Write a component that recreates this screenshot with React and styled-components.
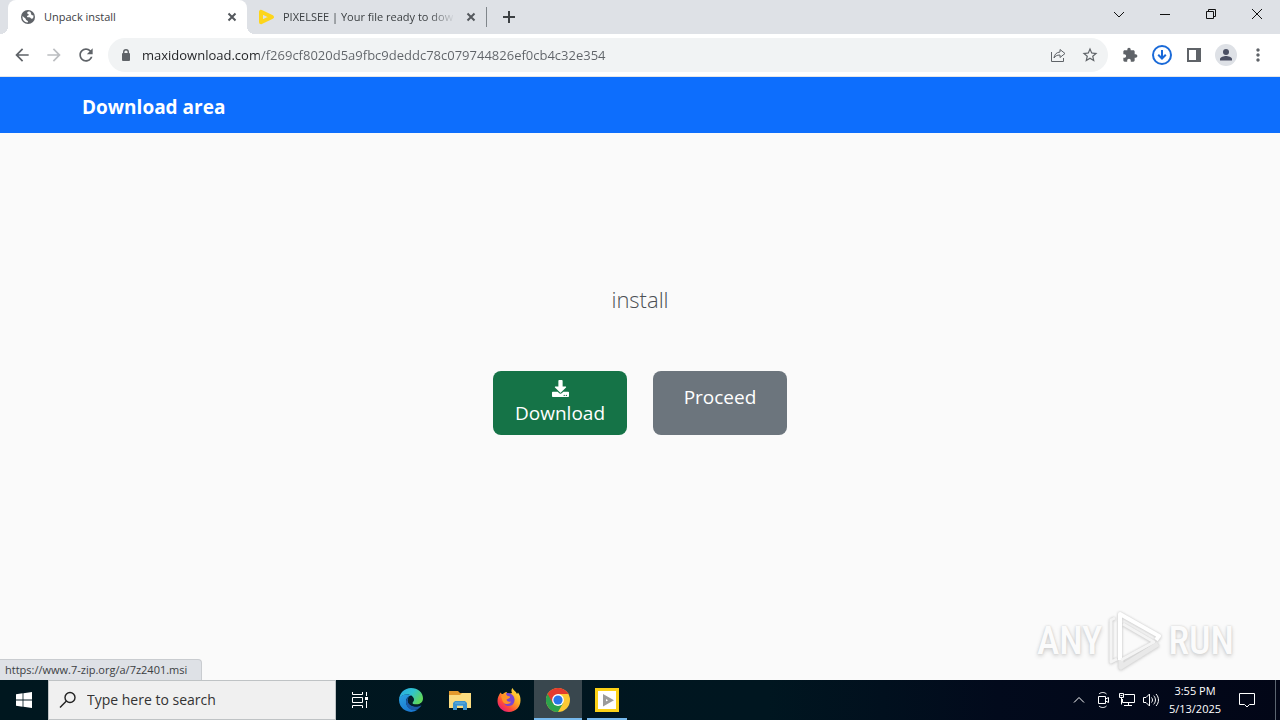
import React from "react";
import styled, { createGlobalStyle } from "styled-components";

const GlobalStyle = createGlobalStyle`
  *, *::before, *::after { box-sizing: border-box; }
  body { margin: 0; font-family: "Open Sans", "Noto Sans", sans-serif; }
  button, input { font: inherit; color: inherit; border: 0; padding: 0; background: none; }
  button { cursor: pointer; }
  svg { display: block; flex: none; }
`;

const Screen = styled.div`
  display: flex;
  flex-direction: column;
  min-height: 100vh;
  background: #fafafa;
`;

/* ---------- tab strip ---------- */

const TabStrip = styled.header`
  display: flex;
  height: 34px;
  padding-left: 8px;
  background: #dee1e6;
`;

const Tab = styled.div`
  position: relative;
  display: flex;
  align-items: center;
  gap: 8px;
  width: 239px;
  padding: 0 7px 0 12px;
  border-radius: 8px 8px 0 0;
  background: ${(p) => (p.$active ? "#fff" : "transparent")};

  &::before,
  &::after {
    content: "";
    display: ${(p) => (p.$active ? "block" : "none")};
    position: absolute;
    bottom: 0;
    width: 8px;
    height: 8px;
  }
  &::before {
    left: -8px;
    background: radial-gradient(circle at 0 0, transparent 8px, #fff 8px);
  }
  &::after {
    right: -8px;
    background: radial-gradient(circle at 100% 0, transparent 8px, #fff 8px);
  }
`;

const TabTitle = styled.button`
  flex: 1;
  min-width: 0;
  overflow: hidden;
  white-space: nowrap;
  text-align: left;
  font-size: 11px;
  line-height: 16px;
  color: #3c4043;
  mask-image: ${(p) => (p.$fade ? "linear-gradient(90deg, #000 calc(100% - 26px), transparent)" : "none")};
`;

const SmallButton = styled.button`
  display: grid;
  place-items: center;
  width: 16px;
  height: 16px;
`;

const TabDivider = styled.span`
  width: 1px;
  height: 20px;
  margin: 7px 14px 0 0;
  background: #80868b;
`;

const NewTab = styled(SmallButton)`
  align-self: center;
`;

const WindowControls = styled.div`
  display: flex;
  margin-left: auto;
`;

const WindowButton = styled.button`
  display: grid;
  place-items: center;
  width: 46px;
  height: 28px;
`;

/* ---------- toolbar ---------- */

const Toolbar = styled.nav`
  display: flex;
  align-items: center;
  height: 43px;
  padding: 0 6px;
  background: #fff;
  border-bottom: 1px solid #e4e6e9;
`;

const IconButton = styled.button`
  display: grid;
  place-items: center;
  width: 32px;
  height: 32px;
  color: ${(p) => p.$color || "#5f6368"};
`;

const Omnibox = styled.form`
  display: flex;
  flex: 1;
  align-items: center;
  min-width: 0;
  height: 34px;
  margin: 0 6px;
  padding: 0 2px 0 10px;
  border-radius: 17px;
  background: #f1f3f4;
  color: #5f6368;
`;

const UrlInput = styled.input`
  flex: 1;
  min-width: 0;
  margin-left: 8px;
  height: 24px;
  font-size: 13px;
  color: #5f6368;
  background: linear-gradient(90deg, #202124 117px, #5f6368 117px);
  background-clip: text;
  -webkit-text-fill-color: transparent;
`;

/* ---------- web page ---------- */

const SiteBar = styled.header`
  display: flex;
  align-items: center;
  height: 56px;
  padding-top: 4px;
  background: #0d6efd;
`;

const Container = styled.div`
  width: 100%;
  max-width: 1140px;
  margin: 0 auto;
  padding: 0 12px;
`;

const Brand = styled.a`
  color: #fff;
  font-size: 19px;
  font-weight: 700;
  line-height: 28px;
  text-decoration: none;
`;

const Page = styled.main`
  position: relative;
  display: flex;
  flex: 1;
  flex-direction: column;
  align-items: center;
  padding: 150px 12px 80px;
`;

const FileName = styled.h1`
  margin: 0 0 56px;
  font-size: 22px;
  font-weight: 300;
  line-height: 32px;
  color: #4b4f54;
`;

const Actions = styled.div`
  display: flex;
  gap: 26px;
`;

const ActionButton = styled.button`
  display: flex;
  flex-direction: column;
  align-items: center;
  gap: 2px;
  width: 134px;
  height: 64px;
  padding-top: ${(p) => (p.$stacked ? 9 : 12)}px;
  border-radius: 8px;
  background: ${(p) => (p.$stacked ? "#157347" : "#6c757d")};
  color: #fff;
  font-size: 19px;
  line-height: 28px;
`;

const StatusBubble = styled.div`
  position: absolute;
  left: 0;
  bottom: 0;
  height: 21px;
  padding: 0 14px 0 5px;
  border: solid #c9ccd0;
  border-width: 1px 1px 0 0;
  border-radius: 0 4px 0 0;
  background: #dee1e6;
  color: #3c4043;
  font-size: 11px;
  line-height: 20px;
`;

const Watermark = styled.div`
  position: absolute;
  right: 46px;
  bottom: 8px;
  display: flex;
  align-items: center;
  gap: 4px;
  color: #fbfbfb;
  font-family: "Roboto Condensed", "Liberation Sans Narrow", "Liberation Sans", sans-serif;
  font-size: 38px;
  font-weight: 500;
  line-height: 62px;
  text-shadow: 0 0 2px #ccc, 0 2px 4px #ccc;
  svg { filter: drop-shadow(0 0 1px #ccc) drop-shadow(0 1px 1px #ddd); }
`;

/* ---------- taskbar ---------- */

const Taskbar = styled.footer`
  display: flex;
  height: 40px;
  background: linear-gradient(90deg, #00171f, #001620 60%, #020a1c 78%, #020617);
  color: #fff;
`;

const TaskButton = styled.button`
  position: relative;
  display: grid;
  place-items: center;
  width: 48px;
  height: 40px;
  background: ${(p) => (p.$active ? "#39474e" : "transparent")};

  &::after {
    content: "";
    display: ${(p) => (p.$running ? "block" : "none")};
    position: absolute;
    right: ${(p) => (p.$active ? 0 : 4)}px;
    bottom: 0;
    left: ${(p) => (p.$active ? 0 : 4)}px;
    height: 2px;
    background: #76b9ed;
  }
`;

const SearchBox = styled.label`
  display: flex;
  align-items: center;
  gap: 10px;
  width: 288px;
  padding-left: 10px;
  border: 1px solid #bfc3c5;
  background: #f0f0f0;
  color: #222;
`;

const SearchInput = styled.input`
  flex: 1;
  min-width: 0;
  font-size: 14px;
  line-height: 20px;
  &::placeholder { color: #333; opacity: 1; }
`;

const Apps = styled.div`
  display: flex;
  gap: 1px;
  margin-left: 3px;
`;

const Tray = styled.div`
  display: flex;
  margin-left: auto;
`;

const TrayButton = styled.button`
  display: grid;
  place-items: center;
  width: ${(p) => (p.$wide ? 40 : 24)}px;
  height: 40px;
`;

const Clock = styled.button`
  width: 64px;
  font-size: 11px;
  line-height: 18px;
  text-align: center;
  white-space: nowrap;
`;

const ClockLine = styled.time`
  display: block;
`;

const ShowDesktop = styled.button`
  width: 5px;
  margin-left: 8px;
  border-left: 1px solid #5b6470;
`;

/* ---------- icons ---------- */

const Material = ({ d, size = 18 }) => (
  <svg width={size} height={size} viewBox="0 0 24 24" fill="currentColor" aria-hidden="true">
    <path d={d} />
  </svg>
);

const Line = ({ d, w = 16, h = 16, sw = 1, color = "currentColor", fill = "none" }) => (
  <svg width={w} height={h} viewBox={`0 0 ${w} ${h}`} fill={fill} stroke={color} strokeWidth={sw} aria-hidden="true">
    <path d={d} />
  </svg>
);

const PATHS = {
  back: "M20 11H7.83l5.59-5.59L12 4l-8 8 8 8 1.41-1.41L7.83 13H20v-2z",
  forward: "M12 4l-1.41 1.41L16.17 11H4v2h12.17l-5.58 5.59L12 20l8-8z",
  reload:
    "M17.65 6.35C16.2 4.9 14.21 4 12 4c-4.42 0-7.99 3.58-7.99 8s3.57 8 7.99 8c3.73 0 6.84-2.55 7.73-6h-2.08c-.82 2.33-3.04 4-5.65 4-3.31 0-6-2.69-6-6s2.69-6 6-6c1.66 0 3.14.69 4.22 1.78L13 11h7V4l-2.35 2.35z",
  star:
    "M22 9.24l-7.19-.62L12 2 9.19 8.63 2 9.24l5.46 4.73L5.82 21 12 17.27 18.18 21l-1.63-7.03L22 9.24zM12 15.4l-3.76 2.27 1-4.28-3.32-2.88 4.38-.38L12 6.1l1.71 4.04 4.38.38-3.32 2.88 1 4.28L12 15.4z",
  puzzle:
    "M20.5 11H19V7c0-1.1-.9-2-2-2h-4V3.5C13 2.12 11.88 1 10.5 1S8 2.12 8 3.5V5H4c-1.1 0-1.99.9-1.99 2v3.8H3.5c1.49 0 2.7 1.21 2.7 2.7s-1.21 2.7-2.7 2.7H2V20c0 1.1.9 2 2 2h3.8v-1.5c0-1.49 1.21-2.7 2.7-2.7 1.49 0 2.7 1.21 2.7 2.7V22H17c1.1 0 2-.9 2-2v-4h1.5c1.38 0 2.5-1.12 2.5-2.5S21.88 11 20.5 11z",
  more:
    "M12 8c1.1 0 2-.9 2-2s-.9-2-2-2-2 .9-2 2 .9 2 2 2zm0 2c-1.1 0-2 .9-2 2s.9 2 2 2 2-.9 2-2-.9-2-2-2zm0 6c-1.1 0-2 .9-2 2s.9 2 2 2 2-.9 2-2-.9-2-2-2z",
};

const GlobeIcon = () => (
  <svg width="16" height="16" viewBox="0 0 16 16" aria-hidden="true">
    <circle cx="8" cy="8" r="7" fill="#5f6368" />
    <path d="M8.500 2.500C6.800 3 6.800 4.500 8 5c1 .3 1 1.400 0 1.600-1 .2-1.500 1-.4 1.600 1.200.5 2.600-.2 3 .8.300 1 1.400 1 2.500.3.400-1 .5-2 .2-3.100-1 .4-2 0-2-1s-.8-1-.6-2C10.500 2.800 9.500 2.400 8.500 2.500zM2.600 7C2 10 3.800 13 7.500 13.500c1-.6.500-1.600-.5-2.100-1.300-.5-1-1.500-1.800-2.200C4.300 8.500 3.500 8 2.600 7z" fill="#fff" />
  </svg>
);

const PixelseeIcon = () => (
  <svg width="16" height="16" viewBox="0 0 16 16" aria-hidden="true">
    <path d="M2 2.800v10.400L13 8z" fill="none" stroke="#fdd51b" strokeWidth="4" strokeLinejoin="round" />
  </svg>
);

const CloseTabIcon = () => <Line d="M4.500 4.500l7 7m0-7l-7 7" sw={2} color="#54585d" />;

const LockIcon = () => (
  <svg width="16" height="16" viewBox="0 0 16 16" aria-hidden="true">
    <rect x="4" y="6" width="8" height="8" rx="1" fill="#5f6368" />
    <path d="M5.700 6.500V5a2.300 2.300 0 0 1 4.600 0v1.500" fill="none" stroke="#5f6368" strokeWidth="1.400" />
  </svg>
);

const DownloadsIcon = () => (
  <svg width="20" height="20" viewBox="0 0 20 20" fill="none" stroke="#1a6ad8" strokeWidth="2" aria-hidden="true">
    <circle cx="10" cy="10" r="9" />
    <path d="M10 5v8.500M6.200 9.700L10 13.500l3.800-3.800" />
  </svg>
);

const PanelIcon = () => (
  <svg width="14" height="14" viewBox="0 0 14 14" fill="#5f6368" aria-hidden="true">
    <path fillRule="evenodd" d="M0 0h14v14H0zM2 2v10h7V2z" />
  </svg>
);

const ProfileIcon = () => (
  <svg width="22" height="22" viewBox="0 0 22 22" aria-hidden="true">
    <circle cx="11" cy="11" r="11" fill="#dee1e6" />
    <circle cx="11" cy="8" r="3" fill="#4a4f63" />
    <path d="M5 16.500v-1.500c0-2 4-3 6-3s6 1 6 3v1.500z" fill="#4a4f63" />
  </svg>
);

const DownloadGlyph = () => (
  <svg width="17" height="17" viewBox="0 0 512 512" fill="currentColor" aria-hidden="true">
    <path d="M216 0h80c13.300 0 24 10.700 24 24v168h87.700c17.800 0 26.700 21.500 14.100 34.100L269.700 378.300c-7.500 7.500-19.800 7.500-27.300 0L90.100 226.100c-12.600-12.600-3.700-34.100 14.100-34.100H192V24c0-13.300 10.700-24 24-24zm296 376v112c0 13.300-10.700 24-24 24H24c-13.300 0-24-10.700-24-24V376c0-13.300 10.700-24 24-24h146.700l49 49c20.100 20.100 52.500 20.100 72.600 0l49-49H488c13.300 0 24 10.700 24 24zm-124 88c0-11-9-20-20-20s-20 9-20 20 9 20 20 20 20-9 20-20zm64 0c0-11-9-20-20-20s-20 9-20 20 9 20 20 20 20-9 20-20z" />
  </svg>
);

const PlayMark = () => (
  <svg width="58" height="62" viewBox="0 0 58 62" fill="none" stroke="#fff" strokeLinejoin="round" aria-hidden="true">
    <path d="M52 34L15 57v-9" stroke="#e9e9e9" strokeWidth="5" />
    <path d="M14 50V4l39 22-3 4" strokeWidth="4" />
    <path d="M9 8l-4 2v42l6-3M17 14l31 18L15 50" stroke="#f4f4f4" strokeWidth="3" />
  </svg>
);

const WindowsIcon = () => (
  <svg width="16" height="16" viewBox="0 0 16 16" fill="#fff" aria-hidden="true">
    <path d="M0 2.200L6.600 1.300v6.200H0zM7.400 1.200L16 0v7.500H7.400zM0 8.400h6.600v6.300L0 13.800zM7.400 8.400H16V16l-8.600-1.200z" />
  </svg>
);

const SearchIcon = () => (
  <svg width="18" height="18" viewBox="0 0 18 18" fill="none" stroke="#222" strokeWidth="1.400" aria-hidden="true">
    <circle cx="11" cy="6.500" r="5" />
    <path d="M7.400 10.100L1 16.500" />
  </svg>
);

const TaskViewIcon = () => (
  <svg width="18" height="16" viewBox="0 0 18 16" fill="none" stroke="#fff" aria-hidden="true">
    <path d="M1.500 0v2.500h10V0M1.500 16v-2.500h10V16M1.500 5.500h10v5h-10zM15.500 0v4M15.500 9v7" />
    <path d="M14 5h3v3h-3z" fill="#fff" stroke="none" />
  </svg>
);

const EdgeIcon = () => (
  <svg width="24" height="24" viewBox="0 0 24 24" aria-hidden="true">
    <defs>
      <linearGradient id="edgeTop" x1="0" y1="0" x2="1" y2="0.500">
        <stop offset="0" stopColor="#2aa7e6" />
        <stop offset="0.550" stopColor="#2fc4cf" />
        <stop offset="1" stopColor="#5fd65c" />
      </linearGradient>
      <linearGradient id="edgeSide" x1="0" y1="0" x2="0.600" y2="1">
        <stop offset="0" stopColor="#2aa0e0" />
        <stop offset="1" stopColor="#1a78d0" />
      </linearGradient>
    </defs>
    <path d="M0 11.500C.5 5 5.500 0 12 0c7 0 12 4.800 12 10.300 0 4-3 6.300-6.500 6.300-2.700 0-4.200-.8-4.200-1.700 0-.7 1.500-1.100 1.500-3.300 0-2.800-2.700-5-6.500-5C4.500 6.600 1.200 8.300 0 11.500z" fill="url(#edgeTop)" />
    <path d="M0 12c0-3.500 4-5.400 8.300-5.400 1.500 0 3 .4 4 1.100C9 8 7 10.500 7 13.500 7 18 11 22 16 22c1 0 2-.2 3-.5A12 12 0 0 1 0 12z" fill="url(#edgeSide)" />
    <path d="M10.300 8.700C8 10 7 11.700 7 14c0 5 4 8.500 9 8 3-.3 5.500-2.600 6.500-4.700-1.500.8-3.300 1.300-5.300 1.300-5 0-8.600-3-8.300-6.300.1-1.500.7-2.700 1.400-3.600z" fill="#1c5aa8" />
    <path d="M10.300 9.200c2-1 4.500.4 4.500 2.400 0 2.200-1.500 2.600-1.500 3.300 0 .9 1.500 1.700 4.200 1.700 2 0 4-.8 5.300-2.300-.6 3-3 4.300-5.700 4.300-5 0-8.600-3-8.200-6.500.1-1.200.6-2.200 1.400-2.900z" fill="#04202c" />
  </svg>
);

const ExplorerIcon = () => (
  <svg width="22" height="20" viewBox="0 0 22 20" aria-hidden="true">
    <path d="M0 1h9l2 2h11v15H0z" fill="#e39a2d" />
    <path d="M0 5h11l2-2h9v15H0z" fill="#fbdc80" />
    <path d="M4 18v-5l2-2h10l2 2v7h-4v-4H8v4H4z" fill="#3d94cf" />
    <path d="M6 13h10M8 15.500h6" stroke="#6ab4e2" />
  </svg>
);

const FirefoxIcon = () => (
  <svg width="24" height="24" viewBox="0 0 24 24" aria-hidden="true">
    <defs>
      <linearGradient id="foxBody" x1="1" y1="0" x2="0.200" y2="1">
        <stop offset="0" stopColor="#fff04a" />
        <stop offset="0.450" stopColor="#ffa824" />
        <stop offset="0.750" stopColor="#ff4a3a" />
        <stop offset="1" stopColor="#e3167e" />
      </linearGradient>
    </defs>
    <path d="M3.500 4.500C4 5.500 5 6 6 6c1-1 2-1.600 3.500-2L11 6l4-1c-1-2-.6-3.500.5-5 1 2.500 3.500 3.500 4.500 6l1-1.500c2 2.500 2.500 5 2.500 8C23.500 19 18.500 24 12 24S.5 19 .5 13c0-3.500 1.300-6 3-8.500z" fill="url(#foxBody)" />
    <path d="M9 5.500C12 4 17 6.500 17.500 11c.4 4-2 7-5.500 7s-5-2-5-4.500C8 11 13 11 12.700 9 11 8.500 9 7.500 9 5.500z" fill="#7a45d2" />
    <path d="M4 8c2-1.600 4.500-1.200 6 0 1.200.1 2.700.2 3 1-.4 1.300-2.800 1.300-3.500 2.300 0 2 2 3 4.500 2.200-1 3-5.500 3.500-7.500 1C5 13 5 10 4 8z" fill="#ff9427" />
  </svg>
);

const ChromeIcon = () => (
  <svg width="24" height="24" viewBox="0 0 24 24" aria-hidden="true">
    <circle cx="12" cy="12" r="12" fill="#fcc934" />
    <path d="M1.600 6A12 12 0 0 0 12 24l5.200-9L12 12z" fill="#2da24c" />
    <path d="M1.600 6A12 12 0 0 1 22.400 6H12v6l-5.200 3z" fill="#e33b2e" />
    <circle cx="12" cy="12" r="5.900" fill="#fff" />
    <circle cx="12" cy="12" r="4.600" fill="#2876e8" />
  </svg>
);

const PixelseeApp = () => (
  <svg width="24" height="24" viewBox="0 0 24 24" aria-hidden="true">
    <path d="M0 0h24v24H0z" fill="#fcd116" />
    <path d="M3 3h18v18H3z" fill="#fff" />
    <path d="M9.500 8.500v7.500L16 12.200z" fill="none" stroke="#9b9b9b" strokeWidth="3" />
  </svg>
);

const RecorderIcon = () => (
  <svg width="16" height="18" viewBox="0 0 16 18" fill="none" stroke="#fff" aria-hidden="true">
    <path d="M3.500 5.500h7v7h-7zM10.500 8l3-1.500v5l-3-1.500M4 3c2-2 5.500-2 7.500 0M4 15c2 2 5.500 2 7.500 0" />
  </svg>
);

const NetworkIcon = () => (
  <svg width="18" height="16" viewBox="0 0 18 16" fill="none" stroke="#fff" aria-hidden="true">
    <path d="M6.500 2.500h10v8h-12V7M10.500 10.500v3M6 13.500h8M1.500 1.500h4v4h-4zM3.500 5.500v7" />
    <path d="M2.500 3.500h2" />
  </svg>
);

const SoundIcon = () => (
  <svg width="18" height="16" viewBox="0 0 18 16" fill="none" stroke="#fff" aria-hidden="true">
    <path d="M1.500 5.500H4L7.500 2v12L4 10.500H1.500zM9.500 5.500c1.300 1.500 1.300 3.500 0 5M11.700 3.700c2.300 2.600 2.300 6 0 8.600M14 2c3.300 3.600 3.300 8.400 0 12" />
  </svg>
);

/* ---------- sections ---------- */

const BrowserTab = ({ active, fade, icon, title }) => (
  <Tab $active={active}>
    {icon}
    <TabTitle $fade={fade}>{title}</TabTitle>
    <SmallButton aria-label={`Close ${title}`}>
      <CloseTabIcon />
    </SmallButton>
  </Tab>
);

const windowButtons = [
  ["Search tabs", "M3 6l5 5 5-5"],
  ["Minimize", "M3 8.500h10"],
  ["Restore", "M3.500 5.500h7v7h-7zM5.500 5.500v-2h7v7h-2"],
  ["Close window", "M3 3l10 10m0-10L3 13"],
];

const apps = [
  { name: "Microsoft Edge", icon: <EdgeIcon /> },
  { name: "File Explorer", icon: <ExplorerIcon /> },
  { name: "Firefox", icon: <FirefoxIcon /> },
  { name: "Google Chrome", icon: <ChromeIcon />, active: true, running: true },
  { name: "Pixelsee", icon: <PixelseeApp />, running: true },
];

export default function App() {
  return (
    <Screen>
      <GlobalStyle />
      <TabStrip>
        <BrowserTab active icon={<GlobeIcon />} title="Unpack install" />
        <BrowserTab fade icon={<PixelseeIcon />} title="PIXELSEE | Your file ready to dow" />
        <TabDivider />
        <NewTab aria-label="New tab">
          <Line d="M8 2v12M2 8h12" sw={2} color="#3c4043" />
        </NewTab>
        <WindowControls>
          {windowButtons.map(([label, d]) => (
            <WindowButton key={label} aria-label={label}>
              <Line d={d} color="#111" />
            </WindowButton>
          ))}
        </WindowControls>
      </TabStrip>

      <Toolbar>
        <IconButton aria-label="Back"><Material d={PATHS.back} size={20} /></IconButton>
        <IconButton aria-label="Forward" $color="#bcbec1"><Material d={PATHS.forward} size={20} /></IconButton>
        <IconButton aria-label="Reload"><Material d={PATHS.reload} size={20} /></IconButton>
        <Omnibox onSubmit={(e) => e.preventDefault()}>
          <LockIcon />
          <UrlInput aria-label="Address" defaultValue="maxidownload.com/f269cf8020d5a9fbc9deddc78c079744826ef0cb4c32e354" />
          <IconButton type="button" aria-label="Share">
            <Line d="M1.500 5v9.500h12V11M10 2.500l5 4-5 4V8C7 8 5 9 4 11c.3-3.500 2.500-5.700 6-6z" />
          </IconButton>
          <IconButton type="button" aria-label="Bookmark"><Material d={PATHS.star} size={18} /></IconButton>
        </Omnibox>
        <IconButton aria-label="Extensions"><Material d={PATHS.puzzle} size={16} /></IconButton>
        <IconButton aria-label="Downloads"><DownloadsIcon /></IconButton>
        <IconButton aria-label="Side panel"><PanelIcon /></IconButton>
        <IconButton aria-label="Profile"><ProfileIcon /></IconButton>
        <IconButton aria-label="Menu"><Material d={PATHS.more} size={20} /></IconButton>
      </Toolbar>

      <SiteBar>
        <Container>
          <Brand href="#">Download area</Brand>
        </Container>
      </SiteBar>

      <Page>
        <FileName>install</FileName>
        <Actions>
          <ActionButton $stacked>
            <DownloadGlyph />
            Download
          </ActionButton>
          <ActionButton>Proceed</ActionButton>
        </Actions>
        <StatusBubble>https://www.7-zip.org/a/7z2401.msi</StatusBubble>
        <Watermark>
          <span>ANY</span>
          <PlayMark />
          <span>RUN</span>
        </Watermark>
      </Page>

      <Taskbar>
        <TaskButton aria-label="Start"><WindowsIcon /></TaskButton>
        <SearchBox>
          <SearchIcon />
          <SearchInput aria-label="Search" placeholder="Type here to search" />
        </SearchBox>
        <TaskButton aria-label="Task view"><TaskViewIcon /></TaskButton>
        <Apps>
          {apps.map((app) => (
            <TaskButton key={app.name} aria-label={app.name} $active={app.active} $running={app.running}>
              {app.icon}
            </TaskButton>
          ))}
        </Apps>
        <Tray>
          <TrayButton aria-label="Show hidden icons"><Line d="M3 10.500l5-5 5 5" sw={1} /></TrayButton>
          <TrayButton aria-label="Meet now"><RecorderIcon /></TrayButton>
          <TrayButton aria-label="Network"><NetworkIcon /></TrayButton>
          <TrayButton aria-label="Volume"><SoundIcon /></TrayButton>
          <Clock>
            <ClockLine>3:55 PM</ClockLine>
            <ClockLine>5/13/2025</ClockLine>
          </Clock>
          <TrayButton $wide aria-label="Notifications">
            <Line w={16} h={16} d="M.5 1.500h15v11h-5l-2.500 2.500-2.500-2.500h-5z" />
          </TrayButton>
          <ShowDesktop aria-label="Show desktop" />
        </Tray>
      </Taskbar>
    </Screen>
  );
}
